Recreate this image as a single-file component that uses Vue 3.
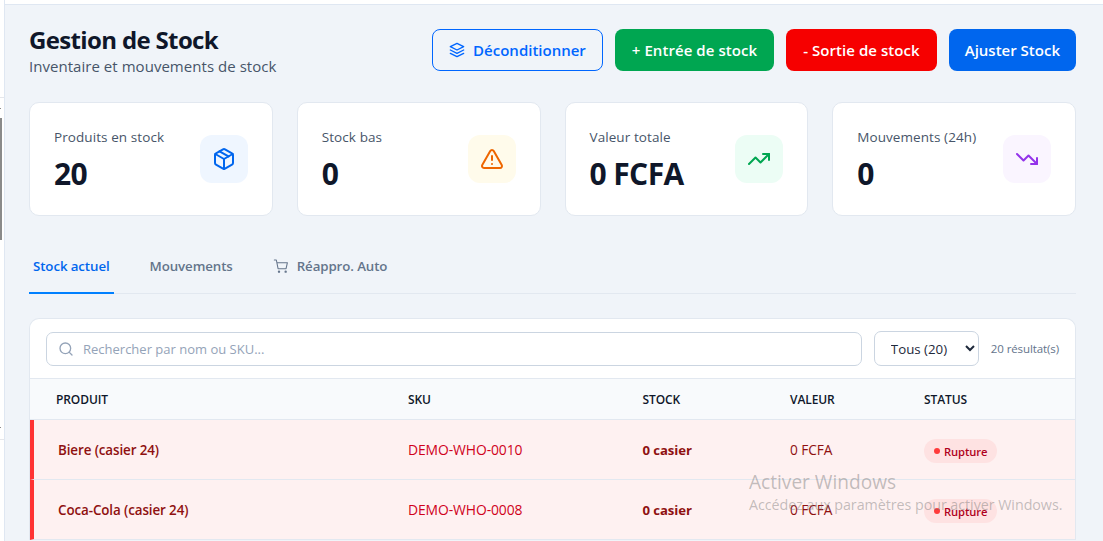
<template>
  <div class="desk">
    <div class="rail">
      <div class="rail-line rail-a"></div>
      <div class="rail-dash dash-a"></div>
      <div class="rail-bar"></div>
      <div class="rail-dash dash-b"></div>
      <div class="rail-line rail-b"></div>
    </div>
    <main class="page">
      <header class="head">
        <div class="titles">
          <h1>Gestion de Stock</h1>
          <p>Inventaire et mouvements de stock</p>
        </div>
        <div class="actions">
          <button class="btn outline">
            <svg viewBox="0 0 24 24" width="16" height="16" fill="none" stroke="currentColor" stroke-width="2" stroke-linecap="round" stroke-linejoin="round"><path d="M12 2 2 7l10 5 10-5-10-5Z"/><path d="m2 12 10 5 10-5"/><path d="m2 17 10 5 10-5"/></svg>
            Déconditionner
          </button>
          <button class="btn green">+ Entrée de stock</button>
          <button class="btn red">- Sortie de stock</button>
          <button class="btn blue">Ajuster Stock</button>
        </div>
      </header>

      <section class="stats">
        <article v-for="s in stats" :key="s.label" class="stat">
          <div class="stat-text">
            <div class="stat-label">{{ s.label }}</div>
            <div class="stat-value">{{ s.value }}</div>
          </div>
          <div class="stat-icon" :class="s.tone">
            <svg viewBox="0 0 24 24" width="24" height="24" fill="none" stroke="currentColor" stroke-width="2" stroke-linecap="round" stroke-linejoin="round">
              <path v-for="d in s.paths" :key="d" :d="d" />
            </svg>
          </div>
        </article>
      </section>

      <nav class="tabs">
        <a class="tab active">Stock actuel</a>
        <a class="tab">Mouvements</a>
        <a class="tab">
          <svg viewBox="0 0 24 24" width="16" height="16" fill="none" stroke="currentColor" stroke-width="1.6" stroke-linecap="round" stroke-linejoin="round"><circle cx="9" cy="20.5" r="1"/><circle cx="19" cy="20.5" r="1"/><path d="M2 3h3l2.6 13h12l2-9H6"/></svg>
          Réappro. Auto
        </a>
      </nav>

      <section class="panel">
        <div class="filters">
          <label class="search">
            <svg viewBox="0 0 24 24" width="16" height="16" fill="none" stroke="currentColor" stroke-width="2" stroke-linecap="round" stroke-linejoin="round"><circle cx="11" cy="11" r="8"/><path d="m21 21-4.3-4.3"/></svg>
            <input type="text" placeholder="Rechercher par nom ou SKU..." />
          </label>
          <select class="select">
            <option>Tous (20)</option>
          </select>
          <span class="count">20 résultat(s)</span>
        </div>
        <div class="thead row">
          <span>PRODUIT</span><span>SKU</span><span>STOCK</span><span>VALEUR</span><span>STATUS</span>
        </div>
        <div v-for="r in rows" :key="r.sku" class="tbody row">
          <span class="name">{{ r.name }}</span>
          <span class="sku">{{ r.sku }}</span>
          <span class="qty">0 casier</span>
          <span class="val">0 FCFA</span>
          <span class="status"><em class="badge"><i></i><b>Rupture</b></em></span>
        </div>
      </section>
    </main>
    <div class="watermark">
      <div class="wm1">Activer Windows</div>
      <div class="wm2">Accédez aux paramètres pour activer Windows.</div>
    </div>
  </div>
</template>

<script setup>
const stats = [
  { label: 'Produits en stock', value: '20', tone: 'i-blue', paths: ['M21 8a2 2 0 0 0-1-1.73l-7-4a2 2 0 0 0-2 0l-7 4A2 2 0 0 0 3 8v8a2 2 0 0 0 1 1.73l7 4a2 2 0 0 0 2 0l7-4A2 2 0 0 0 21 16Z', 'm3.3 7 8.7 5 8.7-5', 'M12 22V12', 'm7.5 4.27 9 5.15'] },
  { label: 'Stock bas', value: '0', tone: 'i-amber', paths: ['m21.73 18-8-14a2 2 0 0 0-3.48 0l-8 14A2 2 0 0 0 4 21h16a2 2 0 0 0 1.73-3Z', 'M12 9v4', 'M12 17h.01'] },
  { label: 'Valeur totale', value: '0 FCFA', tone: 'i-green', paths: ['M22 7 13.5 15.5 8.5 10.5 2 17', 'M16 7h6v6'] },
  { label: 'Mouvements (24h)', value: '0', tone: 'i-purple', paths: ['M22 17 13.5 8.5 8.5 13.5 2 7', 'M16 17h6v-6'] }
]
const rows = [
  { name: 'Biere (casier 24)', sku: 'DEMO-WHO-0010' },
  { name: 'Coca-Cola (casier 24)', sku: 'DEMO-WHO-0008' }
]
</script>

<style>
html, body { margin: 0; height: 100%; overflow: hidden; background: #fff; }
</style>

<style scoped>
.desk {
  display: flex;
  width: 1103px;
  height: 541px;
  overflow: hidden;
  position: relative;
  font-family: "Open Sans", "Noto Sans", sans-serif;
  background: #fff;
}
.rail {
  width: 5px; flex: none; box-sizing: border-box;
  border-right: 1px solid #dfe7f2;
  display: flex; flex-direction: column; padding-top: 97px;
}
.rail-line { height: 1px; background: #e5e7eb; }
.rail-dash { width: 1px; height: 1px; background: #8a8a8a; }
.rail-bar { width: 1.5px; height: 122px; margin-top: 9px; background: #8a8a8a; }
.dash-a { margin-top: 10px; }
.dash-b { margin-top: 187px; }
.rail-b { margin-top: 11px; }
.page {
  flex: 1;
  margin-top: 4px;
  border-top: 1px solid #dfe7f2;
  background: #f0f4f9;
  padding: 20px 27px 0 24px;
  min-width: 0;
  position: relative;
}
.head { display: flex; justify-content: space-between; align-items: flex-start; height: 77px; }
.titles h1 { margin: 0; font-size: 24px; line-height: 30px; font-weight: 700; color: #0f172a; letter-spacing: -0.65px; }
.titles p { margin: 0; font-size: 15px; line-height: 22px; color: #475569; letter-spacing: 0.04px; }
.actions { display: flex; gap: 12px; padding-top: 4px; }
.btn {
  display: inline-flex; align-items: center; gap: 8px;
  height: 42px; box-sizing: border-box; padding: 0 16px;
  border: 1px solid transparent; border-radius: 8px;
  font: 600 15px "Open Sans", sans-serif; color: #fff;
}
.outline { background: transparent; border-color: #0066ff; color: #0066ff; }
.green { background: #00a651; letter-spacing: 0.06px; }
.red { background: #f60000; letter-spacing: 0.06px; }
.blue { background: #0066ee; padding: 0 15px; }

.stats { display: grid; grid-template-columns: repeat(4, 1fr); gap: 24px; }
.stat {
  height: 114px; box-sizing: border-box;
  display: flex; align-items: center; justify-content: space-between;
  padding: 0 24px;
  background: #fff; border: 1px solid #e2e8f0; border-radius: 10px;
}
.stat-text { padding-top: 2px; }
.stat-label { font-size: 13.5px; line-height: 18px; font-weight: 500; color: #475569; letter-spacing: 0.08px; }
.stat-value { margin-top: 10px; font-size: 30px; line-height: 36px; font-weight: 700; color: #0f172a; letter-spacing: -0.6px; }
.stat-icon { width: 48px; height: 48px; border-radius: 12px; display: flex; align-items: center; justify-content: center; }
.i-blue { background: #eff6ff; color: #0066ee; }
.i-amber { background: #fffbeb; color: #ee6600; }
.i-green { background: #ecfdf5; color: #00a651; }
.i-purple { background: #faf5ff; color: #9333ea; }

.tabs { display: flex; gap: 32px; margin-top: 27px; height: 50px; border-bottom: 1px solid #e2e8f0; }
.tab {
  display: inline-flex; align-items: center; gap: 8px; height: 51px; box-sizing: border-box;
  padding: 0 4px 3px; border-bottom: 2px solid transparent;
  font-size: 13.3px; font-weight: 600; color: #64748b; letter-spacing: -0.1px;
}
.tab.active { color: #0066ee; border-bottom-color: #0080ff; }

.panel {
  margin-top: 24px;
  background: #fff; border: 1px solid #e2e8f0; border-bottom: 0; border-radius: 10px 10px 0 0;
  overflow: hidden;
}
.filters { display: flex; align-items: center; height: 59px; padding: 0 16px; gap: 12px; box-sizing: border-box; }
.search {
  flex: 1; height: 34px; box-sizing: border-box; display: flex; align-items: center; gap: 9px; padding: 0 11px;
  border: 1px solid #cbd5e1; border-radius: 7px; color: #94a3b8; background: #fff;
}
.search input { flex: 1; border: 0; outline: 0; padding: 0; font: 13px "Open Sans", sans-serif; background: transparent; min-width: 0; }
.search input::placeholder { color: #94a3b8; opacity: 1; }
.select {
  width: 105px; height: 35px; box-sizing: border-box; padding: 0 0 0 12px;
  border: 1px solid #cbd5e1; border-radius: 7px; background: #fff; color: #1e293b;
  font: 13.3px "Open Sans", sans-serif; outline: 0;
}
.count { font-size: 11.5px; color: #64748b; white-space: nowrap; letter-spacing: -0.1px; }

.row { display: grid; grid-template-columns: 352px 234.5px 147.5px 134px 1fr; align-items: center; padding-left: 26px; }
.thead {
  height: 42px; box-sizing: border-box; background: #f8fafc;
  border-top: 1px solid #e2e8f0; border-bottom: 1px solid #e2e8f0;
  font-size: 12px; font-weight: 600; color: #0f172a; letter-spacing: -0.1px;
}
.tbody {
  height: 60px; box-sizing: border-box;
  background: #fef1f1; border-bottom: 1px solid #e2e8f0; border-left: 4px solid #ff3333;
  padding-left: 24px;
  grid-template-columns: 350px 234.5px 147.5px 134px 1fr;
  font-size: 13px; color: #8f1010; letter-spacing: -0.1px;
}
.name { font-size: 13.4px; font-weight: 600; }
.sku { font-size: 13.9px; color: #d0021b; }
.qty { font-size: 13.2px; font-weight: 700; }
.val { font-size: 13.7px; }
.status { display: flex; padding-top: 2px; }
.badge {
  display: inline-flex; align-items: center; gap: 4px; height: 24px; padding: 0 10px;
  border-radius: 12px; background: #fee2e2; font-style: normal; font-size: 11.2px; color: #b00020;
}
.badge b { font-weight: 600; padding-top: 2px; }
.badge i { width: 6px; height: 6px; border-radius: 50%; background: #ff3b3b; }

.watermark { position: absolute; left: 749px; top: 470px; color: rgba(110,110,110,0.42); pointer-events: none; }
.wm1 { font-size: 19.1px; line-height: 24px; }
.wm2 { font-size: 14.3px; line-height: 20px; margin-top: 1px; letter-spacing: -0.05px; white-space: nowrap; }
</style>
